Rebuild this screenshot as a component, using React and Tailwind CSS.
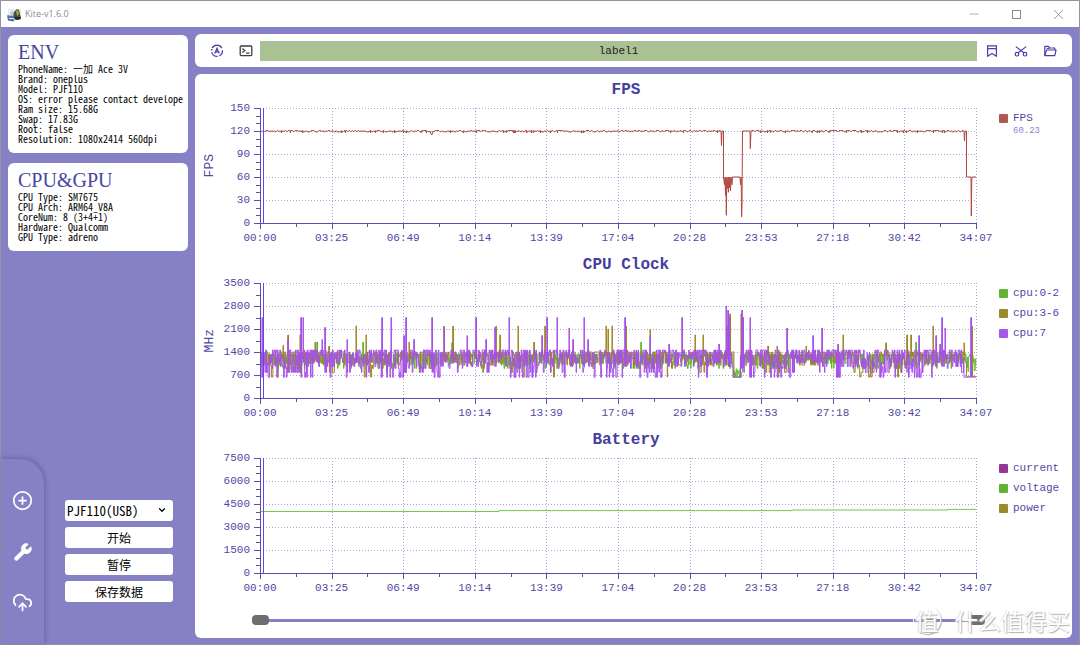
import React, { useState } from 'react';
import { ChevronDown, CirclePlus, CloudUpload, Wrench, Minus, X } from 'lucide-react';

const WIDTH = 716;
const HEIGHT = 115;

const times = ['00:00', '03:25', '06:49', '10:14', '13:39', '17:04', '20:28', '23:53', '27:18', '30:42', '34:07'];

const env = [
  ['PhoneName', '一加 Ace 3V'],
  ['Brand', 'oneplus'],
  ['Model', 'PJF110'],
  ['OS', 'error please contact develope'],
  ['Ram size', '15.68G'],
  ['Swap', '17.83G'],
  ['Root', 'false'],
  ['Resolution', '1080x2414 560dpi'],
];

const hardware = [
  ['CPU Type', 'SM7675'],
  ['CPU Arch', 'ARM64_V8A'],
  ['CoreNum', '8 (3+4+1)'],
  ['Hardware', 'Qualcomm'],
  ['GPU Type', 'adreno'],
];

// repeatable noise, so the charts do not change between renders
const makeRandom = (seed) => () => {
  seed = (seed * 1664525 + 1013904223) % 4294967296;
  return seed / 4294967296;
};

const toPath = (points, max) =>
  points
    .map(([x, v], i) => `${i ? 'L' : 'M'}${x.toFixed(1)} ${(HEIGHT * (1 - v / max)).toFixed(1)}`)
    .join('');

const buildFps = () => {
  const rand = makeRandom(11);
  const points = [];
  const flat = (from, to) => {
    for (let x = from; x < to; x += 1) {
      points.push([x, rand() > 0.55 ? 119 : 120.5]);
      if (rand() > 0.93) points.push([x + 0.5, 117.5], [x + 0.7, 120.5]);
    }
  };
  flat(0, 170);
  points.push([170, 120], [171, 116], [172, 115], [173, 120]);
  flat(174, 461);
  points.push(
    [461, 120], [461.5, 101], [462, 120], [463.5, 120], [463.5, 60], [464.5, 50], [465, 60], [465.5, 36], [466, 60],
    [466.3, 10], [466.8, 58], [467.5, 45], [468, 60], [468.4, 40], [469, 60], [469.4, 46], [470, 59], [470.5, 42],
    [471, 60], [472, 50], [472.5, 60], [474, 60], [475, 60], [480, 60], [480.5, 50], [481.2, 60], [481.6, 8],
    [482, 24], [482.5, 120], [489, 120], [490, 120], [490.3, 97], [491, 120]
  );
  flat(492, 703);
  points.push([704, 120], [704.5, 107], [705, 120], [706.5, 120], [706.5, 60], [711, 60], [711.3, 9], [711.8, 60], [716, 60]);
  return points;
};

const buildClock = ({ seed, levels, dips, dipRate, hold, peaks, quiet }) => {
  const rand = makeRandom(seed);
  const points = [];
  let x = 0;
  while (x < WIDTH) {
    // slow wave decides where the deep dips gather
    const wave = Math.sin(x / 7 + seed) + Math.sin(x / 19);
    const rest = quiet.find(([from, to]) => x >= from && x <= to);
    const rate = wave > 0.3 ? dipRate : dipRate / 6;
    let value = levels[Math.floor(rand() * levels.length)];
    if (rand() < rate) value = dips[Math.floor(rand() * dips.length)];
    if (rest) value = rest[2] + rand() * rest[3];
    const next = Math.min(x + 0.3 + rand() * (rest ? 0.5 : hold), WIDTH);
    points.push([x, value], [next, value]);
    x = next;
  }
  peaks.forEach(([px, v]) => points.push([px, 1300], [px, v], [px + 0.4, v], [px + 0.4, 1300]));
  return points.sort((a, b) => a[0] - b[0]);
};

const charts = [
  {
    title: 'FPS',
    unit: 'FPS',
    max: 150,
    labels: [150, 120, 90, 60, 30, 0],
    minor: 3,
    legend: [{ name: 'FPS', value: '60.23', swatch: 'bg-[#ae5a50]' }],
    series: [{ color: '#b0483e', points: buildFps() }],
  },
  {
    title: 'CPU Clock',
    unit: 'MHz',
    max: 3500,
    labels: [3500, 2800, 2100, 1400, 700, 0],
    minor: 2,
    legend: [
      { name: 'cpu:0-2', swatch: 'bg-[#62b234]' },
      { name: 'cpu:3-6', swatch: 'bg-[#9c8a2c]' },
      { name: 'cpu:7', swatch: 'bg-[#a459e6]' },
    ],
    series: [
      {
        color: '#5fb82f',
        points: buildClock({
          seed: 3,
          levels: [1340, 1340, 1340, 1250, 1150, 1050],
          dips: [900, 1000],
          dipRate: 0.3,
          hold: 0.3,
          peaks: [[57, 1700], [103, 1700], [192, 1680], [381, 1700], [656, 1700]],
          quiet: [[473, 482, 600, 300], [706, 716, 750, 600]],
        }),
      },
      {
        color: '#9c8420',
        points: buildClock({
          seed: 29,
          levels: [1400, 1400, 1300, 1200, 1100, 1000],
          dips: [640, 780, 780, 900],
          dipRate: 0.14,
          hold: 1.5,
          peaks: [
            [23, 1600], [28, 1920], [40, 1920], [55, 1700], [69, 1580], [96, 2190], [106, 1920], [149, 1700], [184, 2190],
            [193, 2190], [236, 2190], [240, 1920], [258, 2190], [274, 1700], [285, 2190], [346, 2190], [348, 2100],
            [352, 2190], [366, 2190], [390, 2090], [435, 1920], [443, 1920], [467, 2190], [470, 2560], [481, 2560],
            [508, 1580], [517, 1580], [546, 1580], [583, 1920], [626, 1680], [647, 1920], [651, 1920], [673, 2190],
            [704, 1680], [712, 2190],
          ],
          quiet: [[473, 480, 630, 20], [706, 716, 650, 10]],
        }),
      },
      {
        color: '#a651e8',
        points: buildClock({
          seed: 71,
          levels: [1460, 1460, 1380, 1300, 1200, 1080, 960],
          dips: [630, 630, 780, 780, 900],
          dipRate: 0.36,
          hold: 0.6,
          peaks: [
            [2, 2450], [28, 1780], [41, 2450], [43, 2450], [62, 1780], [65, 2150], [87, 1780], [122, 2450], [131, 2450],
            [144, 1900], [146, 2450], [154, 1780], [172, 2450], [184, 2130], [207, 1900], [216, 2450], [226, 1780],
            [235, 2150], [249, 2450], [282, 1900], [287, 2450], [297, 2450], [309, 2130], [313, 1780], [324, 2450],
            [328, 1780], [365, 2450], [390, 1900], [409, 1640], [422, 2450], [459, 1640], [466, 2800], [468, 2670],
            [469, 2450], [482, 2670], [483, 2450], [490, 2450], [527, 2130], [553, 1900], [562, 2130], [578, 1640],
            [659, 1900], [676, 1900], [680, 1640], [682, 2450], [685, 2130], [711, 2450],
          ],
          quiet: [[473, 480, 630, 10], [704, 716, 630, 10]],
        }),
      },
    ],
  },
  {
    title: 'Battery',
    unit: '',
    max: 7500,
    labels: [7500, 6000, 4500, 3000, 1500, 0],
    minor: 3,
    legend: [
      { name: 'current', swatch: 'bg-[#96369a]' },
      { name: 'voltage', swatch: 'bg-[#62b234]' },
      { name: 'power', swatch: 'bg-[#9c8a2c]' },
    ],
    series: [
      {
        color: '#74c94f',
        points: [[0, 4010], [239, 4010], [239, 4070], [532, 4070], [532, 4110], [688, 4110], [688, 4150], [716, 4150]],
      },
    ],
  },
];

const AppLogo = () => (
  <svg viewBox="0 0 15 15" className="size-[15px]" aria-hidden="true">
    <rect x="1" y="2" width="13" height="11" fill="#e6edf2" />
    <path d="M3 6 6 3l1 4-3 2z" fill="#b9cfdc" />
    <path d="M6 10 7 5l3-3 2 1 2 8-3 2z" fill="#4c4f2a" />
    <path d="m9 4 2-1 1 4-2 2z" fill="#b0a552" />
    <path d="M0 8.500c2-1 3 1 5 0l4 4-3 2-5-1z" fill="#4d76a8" />
    <path d="M2 11.500h4l2 1.500" fill="none" stroke="#dfeaf4" />
    <path d="M7 10h6l1 2-5 1z" fill="#23281d" />
  </svg>
);

const AutoIcon = () => (
  <svg viewBox="0 0 16 16" className="size-4" fill="none" stroke="#4a3fa8" strokeWidth="1.300">
    <path d="M3.200 5A5.400 5.400 0 0 1 12.800 5M13.400 7.400A5.400 5.400 0 0 1 10.300 12.900M8.600 13.400A5.400 5.400 0 0 1 2.700 9.200M2.600 7.600 2.800 6" />
    <path d="M5.800 10.400 8 5.400l2.200 5M6.700 8.900h2.600" />
  </svg>
);

const TerminalIcon = () => (
  <svg viewBox="0 0 16 16" className="size-4" fill="none" stroke="#3c3c44" strokeWidth="1.300">
    <rect x="2.200" y="3" width="11.600" height="9.600" rx="1" />
    <path d="m4.400 5.600 2.400 2-2.400 2M8 10.200h3.600" />
  </svg>
);

const MarkIcon = () => (
  <svg viewBox="0 0 16 16" className="size-4" fill="none" stroke="#4a3fa8" strokeWidth="1.200">
    <path d="M3.600 2.800h8.800v10.400L8 10.400l-4.400 2.800zM3.600 5.600h8.800" />
  </svg>
);

const CutIcon = () => (
  <svg viewBox="0 0 16 16" className="size-4" fill="none" stroke="#4a3fa8" strokeWidth="1.200">
    <circle cx="4" cy="11.200" r="1.800" />
    <circle cx="12" cy="11.200" r="1.800" />
    <path d="m2.800 3.600 8 6.200M13.200 3.600l-8 6.200" />
  </svg>
);

const FolderIcon = () => (
  <svg viewBox="0 0 16 16" className="size-4" fill="none" stroke="#4a3fa8" strokeWidth="1.200" strokeLinejoin="round">
    <path d="M2.800 12.600V3.400h3.600l1.400 1.600h5v2" />
    <path d="M2.800 12.600 4.600 7h9.400l-1.200 5.600z" />
    <path d="M4.600 5.400h3" strokeWidth="1" />
  </svg>
);

const InfoCard = ({ title, rows }) => (
  <section className="overflow-hidden rounded-md bg-white pt-[5px] pb-[9px] pl-[10px] text-[10px] leading-[10px] whitespace-nowrap text-black">
    <h2 className="font-['Liberation_Serif',serif] text-[20px] leading-6 text-[#4646a0]">{title}</h2>
    {rows.map(([name, value]) => (
      <p key={name}>{`${name}: ${value}`}</p>
    ))}
  </section>
);

const Plot = ({ chart }) => {
  const steps = (chart.labels.length - 1) * chart.minor;
  return (
    <svg
      viewBox={`0 0 ${WIDTH} ${HEIGHT}`}
      preserveAspectRatio="none"
      className="block h-[115px] w-full overflow-visible"
      fill="none"
    >
      <g stroke="#a9a2dd" strokeDasharray="1 2" shapeRendering="crispEdges">
        {chart.labels.map((label, i) => (
          <path key={label} d={`M0 ${i * 23 + 0.5}H${WIDTH}`} />
        ))}
        {times.map((time, i) => (
          <path key={time} d={`M${i * 71.6 + 0.5} 0V${HEIGHT}`} />
        ))}
      </g>
      {chart.series.map(({ color, points }) => (
        <path key={color} d={toPath(points, chart.max)} stroke={color} strokeWidth="1" strokeLinejoin="bevel" />
      ))}
      <g stroke="#5a4fae" shapeRendering="crispEdges">
        <path d={`M0.500 0V${HEIGHT + 6}M0 ${HEIGHT + 0.5}H${WIDTH}`} />
        {Array.from({ length: steps + 1 }, (_, i) => (
          <path key={i} d={`M${i % chart.minor ? -4 : -6} ${(i * HEIGHT) / steps + 0.5}H0`} />
        ))}
        {Array.from({ length: 21 }, (_, i) => (
          <path key={i} d={`M${i * 35.8 + 0.5} ${HEIGHT}v${i % 2 ? 4 : 6}`} />
        ))}
      </g>
      <path d={`M3.500 0V${HEIGHT}`} stroke="#6f3df2" />
    </svg>
  );
};

const Chart = ({ chart }) => (
  <section className="grid grid-cols-[65px_1fr_96px] font-['Liberation_Mono',monospace] text-[11px] text-[#5048a4]">
    <h3 className="col-start-2 mb-2 pl-4 text-center text-base leading-5 font-bold text-[#453da0]">{chart.title}</h3>
    <div className="col-start-1 row-start-2 flex items-center justify-between pr-[10px] pl-[7px]">
      <span className="w-4 rotate-180 text-center text-[13px] leading-4 [writing-mode:vertical-rl]">{chart.unit}</span>
      <div className="flex h-[115px] flex-col justify-between text-right">
        {chart.labels.map((label) => (
          <span key={label} className="flex h-0 items-center justify-end">{label}</span>
        ))}
      </div>
    </div>
    <div className="row-start-2">
      <Plot chart={chart} />
    </div>
    <ul className="row-start-2 pl-[23px] leading-5">
      {chart.legend.map((item) => (
        <li key={item.name}>
          <div className="flex items-center gap-[5px]">
            <span className={`size-[9px] rounded-[1px] ${item.swatch}`} />
            {item.name}
          </div>
          {item.value && <div className="-mt-0.5 pl-[14px] text-[9px] leading-[10px] text-[#8d85cf]">{item.value}</div>}
        </li>
      ))}
    </ul>
    <div className="col-start-2 mt-[7px] flex h-4 items-center justify-between">
      {times.map((time) => (
        <span key={time} className="flex w-0 justify-center">{time}</span>
      ))}
    </div>
  </section>
);

const thumb =
  "pointer-events-none absolute inset-0 w-full appearance-none bg-transparent [&::-webkit-slider-thumb]:pointer-events-auto [&::-webkit-slider-thumb]:h-[10px] [&::-webkit-slider-thumb]:w-[17px] [&::-webkit-slider-thumb]:appearance-none [&::-webkit-slider-thumb]:rounded-[4px] [&::-webkit-slider-thumb]:bg-[#6e6e6e]";

const RangeSlider = () => {
  const [start, setStart] = useState(0);
  const [end, setEnd] = useState(100);
  return (
    <div className="relative mt-4 mr-[87px] ml-[57px] flex h-4 items-center">
      <div className="h-[3px] w-full bg-[#8680c5]" />
      <input
        type="range"
        aria-label="Range start"
        value={start}
        onChange={(e) => setStart(Math.min(Number(e.target.value), end))}
        className={thumb}
      />
      <input
        type="range"
        aria-label="Range end"
        value={end}
        onChange={(e) => setEnd(Math.max(Number(e.target.value), start))}
        className={thumb}
      />
    </div>
  );
};

const railButton = 'flex h-[51px] w-full items-center justify-center';
const actionButton = 'h-[21px] rounded-[3px] bg-white text-xs text-black';

const App = () => {
  const [device, setDevice] = useState('PJF110(USB)');

  return (
    <div className="flex min-h-screen flex-col border border-[#94929f] bg-[#8680c5] font-['Noto_Sans_CJK_SC',sans-serif] [font-feature-settings:'hwid']">
      <header className="flex h-[26px] items-center bg-white pl-[6px]">
        <AppLogo />
        <h1 className="ml-[3px] flex-1 font-['Open_Sans',sans-serif] text-[9px] text-[#8c8c8c]">Kite-v1.6.0</h1>
        <div className="flex items-center text-[#777]">
          <button type="button" aria-label="Minimize" className="flex w-[42px] justify-center">
            <Minus size={14} strokeWidth={1} />
          </button>
          <button type="button" aria-label="Maximize" className="flex w-[42px] justify-center">
            <span className="size-[9px] border border-[#8a8a8a]" />
          </button>
          <button type="button" aria-label="Close" className="flex w-[42px] justify-center">
            <X size={17} strokeWidth={1} />
          </button>
        </div>
      </header>

      <div className="flex flex-1">
        <aside className="flex w-[194px] shrink-0 flex-col justify-between">
          <div className="flex flex-col gap-[10px] pt-2 pr-[7px] pl-[7px]">
            <InfoCard title="ENV" rows={env} />
            <InfoCard title="CPU&GPU" rows={hardware} />
          </div>
          <div className="flex items-stretch">
            <nav className="h-[185px] w-[43px] rounded-tr-[24px] pt-4 text-white shadow-[1px_-1px_5px_rgba(60,50,130,0.4)]">
              <button type="button" aria-label="Add" className={railButton}>
                <CirclePlus size={21} strokeWidth={2} />
              </button>
              <button type="button" aria-label="Tools" className={railButton}>
                <Wrench size={20} fill="currentColor" strokeWidth={1} />
              </button>
              <button type="button" aria-label="Upload" className={railButton}>
                <CloudUpload size={21} strokeWidth={2} />
              </button>
            </nav>
            <div className="ml-[21px] flex w-[108px] flex-col gap-[6px] pt-[41px]">
              <div className="relative">
                <select
                  aria-label="Device"
                  value={device}
                  onChange={(e) => setDevice(e.target.value)}
                  className="block h-[21px] w-full appearance-none rounded-[3px] bg-white pl-[2px] text-[13px] leading-5 text-black"
                >
                  <option>PJF110(USB)</option>
                </select>
                <ChevronDown size={10} strokeWidth={3} className="pointer-events-none absolute top-[5px] right-[6px]" />
              </div>
              <button type="button" className={actionButton}>开始</button>
              <button type="button" className={actionButton}>暂停</button>
              <button type="button" className={actionButton}>保存数据</button>
            </div>
          </div>
        </aside>

        <main className="flex min-w-0 flex-1 flex-col gap-[7px] pt-[7px] pr-[7px] pb-[6px]">
          <div className="flex h-[33px] items-center rounded-md bg-white px-[14px]">
            <button type="button" aria-label="Auto"><AutoIcon /></button>
            <button type="button" aria-label="Terminal" className="ml-[13px]"><TerminalIcon /></button>
            <button
              type="button"
              className="ml-[6px] h-5 flex-1 bg-[#aac193] font-['Liberation_Mono',monospace] text-[11px] leading-5 text-[#222]"
            >
              label1
            </button>
            <div className="ml-[7px] flex gap-[13px]">
              <button type="button" aria-label="Bookmark"><MarkIcon /></button>
              <button type="button" aria-label="Cut"><CutIcon /></button>
              <button type="button" aria-label="Open folder"><FolderIcon /></button>
            </div>
          </div>

          <div className="relative flex-1 rounded-md bg-white pt-[6px]">
            <div className="flex flex-col gap-[9px]">
              {charts.map((chart) => (
                <Chart key={chart.title} chart={chart} />
              ))}
            </div>
            <RangeSlider />
            <div className="pointer-events-none absolute right-[2px] bottom-1 flex items-center gap-[14px] text-[23px] leading-7 text-white [text-shadow:1px_1px_1px_#b0b0b0,-1px_0_1px_#dcdcdc]">
              <span className="flex size-7 items-center justify-center rounded-full border border-white shadow-[1px_1px_1px_#b0b0b0]">
                值
              </span>
              <span>什么值得买</span>
            </div>
          </div>
        </main>
      </div>
    </div>
  );
};

export default App;
